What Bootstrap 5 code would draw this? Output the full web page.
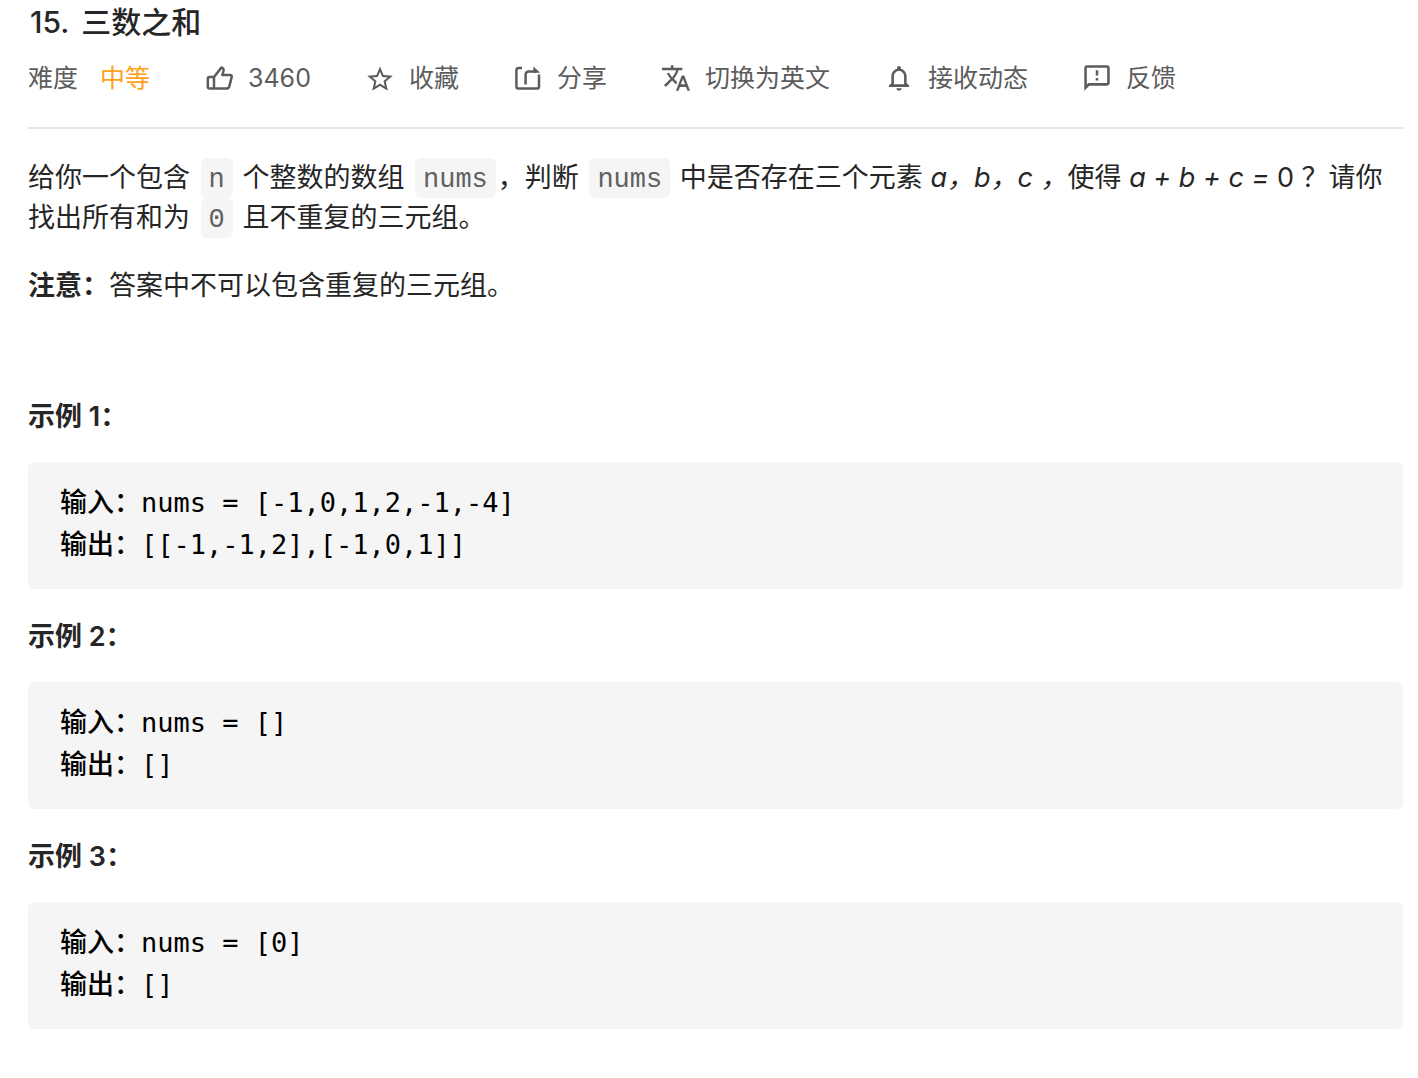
<!DOCTYPE html>
<html lang="zh-CN">
<head>
<meta charset="utf-8">
<meta name="viewport" content="width=device-width, initial-scale=1">
<title>15. 三数之和</title>
<link href="https://cdn.jsdelivr.net/npm/bootstrap@5.3.0/dist/css/bootstrap.min.css" rel="stylesheet">
<style>
  body { font-family: Inter, "Noto Sans CJK SC", sans-serif; font-size: 27px; line-height: 40px; color: #262626; background: #fff; }
  .problem { padding: 2px 15px 48px 28px; }
  .problem-title { font-size: 30px; line-height: 40px; font-weight: 500; gap: 12px; padding-left: 2px; }
  .toolbar { font-size: 25px; line-height: 36px; color: #5c5c5c; gap: 16px 55px; padding: 18px 0 31px; border-bottom: 2px solid #e5e5e5; }
  .level { color: #ffa119; }
  .level-group { gap: 22px; }
  .tool { gap: 15px; font-size: 25px; line-height: 36px; color: #5c5c5c; border-radius: 4px; }
  .tool svg { width: 28px; height: 28px; fill: currentColor; }
  .tool .stroked { fill: none; stroke: currentColor; stroke-width: 2.5; stroke-linejoin: round; }
  .statement { padding-top: 29px; }
  .statement p { margin-bottom: 28px; }
  .statement code { font-family: "Liberation Mono", monospace; font-size: 27px; line-height: 1; color: #616161; background: #f5f5f5; border-radius: 6px; padding: 7px 8px 3px; margin: 0 2px 0 3px; }
  .statement strong, .example strong { font-weight: 600; }
  .examples { padding-top: 63px; }
  .example h2 { font-size: 27px; line-height: 40px; font-weight: 600; margin-bottom: 25px; }
  .example pre { font-family: "DejaVu Sans Mono", "Noto Sans CJK SC", monospace; font-size: 27px; line-height: 42px; color: #000; background: #f5f5f5; border-radius: 6px; padding: 20px 32px 23px; margin-bottom: 28px; }
  .example pre strong { font-family: "Noto Sans CJK SC", sans-serif; line-height: 1; font-weight: 500; }
</style>
</head>
<body>
<main class="problem">
  <h1 class="problem-title d-flex mb-0"><span>15.</span><span>三数之和</span></h1>
  <div class="toolbar d-flex flex-wrap align-items-center">
    <div class="level-group d-flex"><span>难度</span><span class="level">中等</span></div>
    <button type="button" class="tool btn p-0 border-0 d-flex align-items-center">
      <svg viewBox="0 0 28 28" aria-hidden="true"><path class="stroked" d="M9 13 16.6 3.4Q19 4.2 18.5 6.8L17.4 11H24.8Q27.2 11 26.6 13.4L24.3 22.4Q23.7 24.6 21.4 24.6H4.6Q2.8 24.6 2.8 22.8V14.8Q2.8 13 4.6 13ZM9 13V24.6"/></svg>3460</button>
    <button type="button" class="tool btn p-0 border-0 d-flex align-items-center">
      <svg viewBox="1 0 22 22" aria-hidden="true"><path d="M22 9.24l-7.19-.62L12 2 9.19 8.63 2 9.24l5.46 4.73L5.82 21 12 17.27 18.18 21l-1.63-7.03L22 9.24zM12 15.4l-3.76 2.27 1-4.28-3.32-2.88 4.38-.38L12 6.1l1.71 4.04 4.38.38-3.32 2.88 1 4.28L12 15.4z"/></svg>收藏</button>
    <button type="button" class="tool btn p-0 border-0 d-flex align-items-center">
      <svg viewBox="0 0 28 28" aria-hidden="true"><path class="stroked" d="M8 4H4.6Q2.4 4 2.4 6.2V22.4Q2.4 24.6 4.6 24.6H22.8Q25 24.6 25 22.4V10.4M11.6 20.4V10.8Q11.6 7.6 14.8 7.6H22"/><path d="M19.4 2.4 26.2 8.8H19.4Z"/></svg>分享</button>
    <button type="button" class="tool btn p-0 border-0 d-flex align-items-center">
      <svg viewBox="1 1 22 22" aria-hidden="true"><path d="M12.87 15.07l-2.54-2.51.03-.03c1.74-1.94 2.98-4.17 3.71-6.53H17V4h-7V2H8v2H1v1.99h11.17C11.5 7.92 10.44 9.75 9 11.35 8.07 10.32 7.3 9.19 6.69 8h-2c.73 1.63 1.73 3.17 2.98 4.56l-5.09 5.02L4 19l5-5 3.11 3.11.76-2.04zM18.5 10h-2L12 22h2l1.12-3h4.75L21 22h2l-4.5-12zm-2.62 7l1.62-4.33L19.12 17h-3.24z"/></svg>切换为英文</button>
    <button type="button" class="tool btn p-0 border-0 d-flex align-items-center">
      <svg viewBox="1 1 22 22" aria-hidden="true"><path d="M12 22c1.1 0 2-.9 2-2h-4c0 1.1.9 2 2 2zm6-6v-5c0-3.07-1.63-5.64-4.5-6.32V4c0-.83-.67-1.5-1.5-1.5s-1.5.67-1.5 1.5v.68C7.64 5.36 6 7.92 6 11v5l-2 2v1h16v-1l-2-2zm-2 1H8v-6c0-2.48 1.51-4.5 4-4.5s4 2.02 4 4.5v6z"/></svg>接收动态</button>
    <button type="button" class="tool btn p-0 border-0 d-flex align-items-center">
      <svg viewBox="1 1 22 22" aria-hidden="true"><path d="M20 2H4c-1.1 0-1.99.9-1.99 2L2 22l4-4h14c1.1 0 2-.9 2-2V4c0-1.1-.9-2-2-2zm0 14H5.17L4 17.17V4h16v12zM11 12h2v2h-2zM11 6h2v4h-2z"/></svg>反馈</button>
  </div>

  <section class="statement">
    <p>给你一个包含 <code>n</code> 个整数的数组 <code>nums</code>，判断 <code>nums</code> 中是否存在三个元素 <em>a，b，c ，</em>使得 <em>a + b + c =</em> 0 ？请你找出所有和为 <code>0</code> 且不重复的三元组。</p>
    <p><strong>注意：</strong>答案中不可以包含重复的三元组。</p>
  </section>

  <section class="examples">
    <article class="example">
      <h2>示例 1：</h2>
<pre><strong>输入：</strong>nums = [-1,0,1,2,-1,-4]
<strong>输出：</strong>[[-1,-1,2],[-1,0,1]]</pre>
    </article>
    <article class="example">
      <h2>示例 2：</h2>
<pre><strong>输入：</strong>nums = []
<strong>输出：</strong>[]</pre>
    </article>
    <article class="example">
      <h2>示例 3：</h2>
<pre class="mb-0"><strong>输入：</strong>nums = [0]
<strong>输出：</strong>[]</pre>
    </article>
  </section>
</main>
<script src="https://cdn.jsdelivr.net/npm/bootstrap@5.3.0/dist/js/bootstrap.bundle.min.js"></script>
</body>
</html>
